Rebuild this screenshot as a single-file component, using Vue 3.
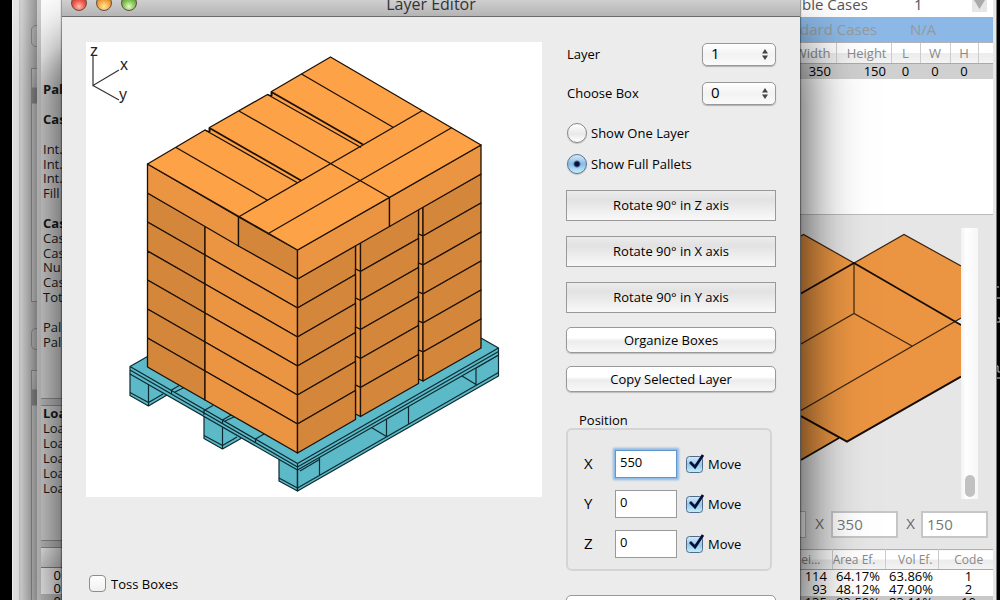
<script setup>
import { ref } from 'vue'

const layer = ref('1')
const box = ref('0')
const mode = ref('full')
const toss = ref(false)
const axes = ref([
  { name: 'X', value: '550', move: true },
  { name: 'Y', value: '0', move: true },
  { name: 'Z', value: '0', move: true },
])

const summary = [
  ['Pal', true], ['', false], ['Cas', true], ['', false], ['Int.', false], ['Int.', false],
  ['Int.', false], ['Fill', false], ['', false], ['Cas', true], ['Cas', false], ['Cas', false],
  ['Nu', false], ['Cas', false], ['Tot', false], ['', false], ['Pall', false], ['Pall', false],
]
const loads = [['Loa', true], ['Loa', false], ['Loa', false], ['Loa', false], ['Loa', false], ['Loa', false]]

const results = [
  ['114', '64.17%', '63.86%', '1'],
  ['93', '48.12%', '47.90%', '2'],
  ['135', '83.50%', '83.11%', '10'],
]

const H = 29
const courses = [1, 2, 3, 4, 5, 6]
const quad = (x1, y1, x2, y2) => `${x1},${y1} ${x2},${y2} ${x2},${y2 + H} ${x1},${y1 + H}`
</script>

<template>
  <div class="desktop">
    <svg class="marks" viewBox="0 0 3 600" width="3" height="600" aria-hidden="true">
      <path d="M0 287h2M0 298h3M1 318h2v4h-3M0 366h1v6h2M0 378h3" fill="none" stroke="#ccc" />
    </svg>

    <div class="back-window">
      <i class="knob k1"></i><i class="strip s1"></i>
      <i class="knob k2"></i><i class="strip s2"></i>
    </div>

    <main class="main-window">
      <section class="side">
        <div class="lines summary">
          <span v-for="(l, i) in summary" :key="i" :class="{ bold: l[1] }">{{ l[0] }}</span>
        </div>
        <div class="divider"></div>
        <div class="lines loads">
          <span v-for="(l, i) in loads" :key="i" :class="{ bold: l[1] }">{{ l[0] }}</span>
        </div>
        <div class="divider"></div>
        <div class="side-head"></div>
        <div class="side-rows"><span>0</span><span>0</span><span class="sel">0</span></div>
      </section>

      <section class="right">
        <div class="combo">
          <span class="cases">ble Cases</span><span>1</span>
          <button type="button" class="drop" aria-label="Open list">
            <svg width="15" height="12" viewBox="0 0 15 12"><path d="M2 0h11l-5.500 9z" fill="#aaa" /></svg>
          </button>
        </div>
        <div class="combo picked"><span class="cases">dard Cases</span><span>N/A</span></div>
        <table class="sizes">
          <thead><tr><th>Width</th><th>Height</th><th>L</th><th>W</th><th>H</th><th></th></tr></thead>
          <tbody><tr><td>350</td><td>150</td><td>0</td><td>0</td><td>0</td><td></td></tr></tbody>
        </table>
        <div class="blank"></div>
        <div class="preview">
          <svg viewBox="801 214 160 283" width="160" height="283" aria-hidden="true">
            <path d="M801 235L803.500 233.500L854 262L904 233.500L961 265V376L847 440.500L839 437L801 459Z" fill="#eb9542" />
            <path d="M955 320.500L961 317.500V324Z" fill="#dcecf5" />
            <g fill="none" stroke="#3a2410" stroke-width="1.200">
              <path d="M801 235L803.500 233.500L854 262L904 233.500L961 265M854 262V312.500M801 343L854 312.500L912 345M961 317L801 409.500" />
            </g>
            <g fill="none" stroke="#150c04" stroke-width="1.600">
              <path d="M801 292.500L854 262L961 324M801 459L839 437" />
              <path d="M801 415L847 440.500L961 375.500" stroke-width="2" />
            </g>
          </svg>
          <div class="track"><i></i></div>
        </div>
        <div class="dims">
          <i class="stub"></i>
          <span>X</span><input value="350" aria-label="Width" />
          <span>X</span><input value="150" aria-label="Height" />
        </div>
        <table class="results">
          <thead><tr><th>ei...</th><th>Area Ef.</th><th>Vol Ef.</th><th>Code</th></tr></thead>
          <tbody>
            <tr v-for="(r, i) in results" :key="i" :class="{ sel: i === 2 }">
              <td v-for="c in r" :key="c">{{ c }}</td>
            </tr>
          </tbody>
        </table>
      </section>
    </main>

    <div class="dialog" role="dialog" aria-labelledby="title">
      <header>
        <div class="lights"><i class="red"></i><i class="amber"></i><i class="green"></i></div>
        <h1 id="title">Layer Editor</h1>
      </header>
      <div class="body">
        <div class="stage">
          <svg class="canvas" viewBox="86 42 456 455" role="img" aria-label="Loaded pallet">
            <g fill="none" stroke="#333" stroke-width="1.200">
              <path d="M93 55V85.500L119 70M93 85.500L119 100" />
            </g>
            <g class="axis"><text x="90" y="56">z</text><text x="120" y="70">x</text><text x="119" y="100">y</text></g>

            <g fill="#5cb9c8" stroke="#0d2a30" stroke-width="1.200" stroke-linejoin="round">
              <path d="M130 374V395.500L148.500 406L167 395V384Z" />
              <path d="M130 392.500L148.500 402.500L163 394M148.500 384V406" fill="none" />
              <path d="M204 416V438.500L222.500 449L241 438.500V426Z" />
              <path d="M204 435.500L222.500 445.500L237 437M222.500 424V449" fill="none" />
              <path d="M279 459V481L297.500 491V469Z" />
              <path d="M279 478L297.500 488" fill="none" />
              <path d="M297.500 469V491L498.500 376V354Z" />
              <path d="M297.500 488L498.500 372.500M319.500 456V475.500M386.500 417V436.500M408.500 403V423.500M368 425.500L386.500 436.500M476 365V385M458 373.500L476 384.500M300 471L319.500 459.500M386.500 419L408.500 406M476 368L498.500 355" fill="none" />
              <path d="M130 366.500L147.500 356.500L314 300L481 338L498.500 348V355L297.500 470L130 374Z" />
              <path d="M130 366.500L297.500 463.500L498.500 348M130 370L297.500 467L498.500 351.500M297.500 463V491" fill="none" />
              <path d="M171.500 394V390L181 384.500M175 392L185 387M204 415V410.500L213 405.500M222.500 424V420L232 414.500M225 421L236 416M255.500 443V439L264 434" fill="none" />
            </g>

            <g stroke="#1d1005" stroke-width="1.300" stroke-linejoin="round">
              <g v-for="n in courses" :key="n">
                <polygon :points="quad(147.5, 164 + n * H, 205, 197 + n * H)" fill="#d4873b" />
                <polygon :points="quad(205, 197 + n * H, 297.5, 250 + n * H)" fill="#eb9542" />
                <polygon :points="quad(355.5, 211 + n * H, 360.5, 213.5 + n * H)" fill="#eb9542" />
                <polygon :points="quad(418.5, 176 + n * H, 423, 178 + n * H)" fill="#eb9542" />
                <polygon :points="quad(297.5, 250 + n * H, 355.5, 216.5 + n * H)" fill="#d4873b" />
                <polygon :points="quad(360.5, 213.5 + n * H, 418.5, 180.5 + n * H)" fill="#d4873b" />
                <polygon :points="quad(423, 178 + n * H, 481, 145 + n * H)" fill="#d4873b" />
              </g>
              <polygon :points="quad(147.5, 164, 238.5, 217)" fill="#eb9542" />
              <polygon :points="quad(238.5, 217, 297.5, 250)" fill="#d4873b" />
              <polygon :points="quad(297.5, 250, 389.5, 197.5)" fill="#eb9542" />
              <polygon :points="quad(389.5, 197.5, 481, 145)" fill="#eb9542" />
              <path d="M147.500 164L205 130L209.500 132V127.500L267.500 94.500L271.500 96V91.500L330.500 57L481 145L297.500 250Z" fill="#fda246" />
              <path d="M238.500 217L422.500 110.500M267.500 234L452 127.500M176 147.500L268 200.500M205 130L297 182.500M239 111L389.500 197.500M267.500 94.500L361 147.500M301.500 74L393.500 127.500" fill="none" />
              <path d="M209.500 127.500V132M271.500 91.500V96M209.500 128L301 180.500M271.500 92L363 144.500" fill="none" stroke-width="1.800" />
            </g>
          </svg>
          <label class="toss"><input v-model="toss" type="checkbox" class="empty" />Toss Boxes</label>
        </div>

        <form class="tools" @submit.prevent>
          <div class="pick">
            <label for="layer">Layer</label>
            <select id="layer" v-model="layer"><option>1</option></select>
          </div>
          <div class="pick">
            <label for="box">Choose Box</label>
            <select id="box" v-model="box"><option>0</option></select>
          </div>
          <div class="radios">
            <label><input v-model="mode" type="radio" name="mode" value="one" />Show One Layer</label>
            <label><input v-model="mode" type="radio" name="mode" value="full" />Show Full Pallets</label>
          </div>
          <div class="rotates">
            <button v-for="a in ['Z', 'X', 'Y']" :key="a" type="button" class="square">Rotate 90° in {{ a }} axis</button>
          </div>
          <div class="actions">
            <button type="button" class="round">Organize Boxes</button>
            <button type="button" class="round">Copy Selected Layer</button>
          </div>
          <fieldset>
            <legend>Position</legend>
            <div class="group">
              <div v-for="(a, i) in axes" :key="a.name" class="axis-row">
                <label :for="'pos' + a.name">{{ a.name }}</label>
                <input :id="'pos' + a.name" v-model="a.value" type="text" :class="{ active: i === 0 }" />
                <label class="move"><input v-model="a.move" type="checkbox" />Move</label>
              </div>
            </div>
          </fieldset>
          <button type="button" class="round" aria-label="Apply"></button>
        </form>
      </div>
    </div>
  </div>
</template>

<style>
body { background: #000; overflow: hidden; }
</style>

<style scoped>
* { box-sizing: border-box; }
.desktop {
  position: relative;
  height: 100vh;
  overflow: hidden;
  background: #000;
  color: #000;
  font: 13px/16px "Open Sans", "Noto Sans", sans-serif;
}
input, select, button { font: inherit; color: inherit; margin: 0; }
.marks { position: absolute; right: 0; top: 0; }

.back-window {
  position: absolute;
  left: 12px;
  top: 0;
  bottom: 0;
  width: 60px;
  border-left: 1px solid #f4f4f4;
  background: linear-gradient(to right, #e6e6e6 6px, #c4c4c4 6px, #dedede 8px, #dcdcdc);
}
.knob, .strip { position: absolute; left: 18px; width: 30px; border: 1px solid #aaa; }
.knob { height: 22px; border-radius: 5px; background: #e2e2e2; }
.strip { height: 260px; background: linear-gradient(#eee, #ddd 18px, #aaa 19px, #aaa 34px, #eee 35px); }
.k1 { top: 25px; }
.s1 { top: 68px; height: 234px; }
.k2 { top: 328px; }
.s2 { top: 370px; }

.main-window {
  position: absolute;
  left: 37px;
  right: 3px;
  top: 0;
  bottom: 0;
  display: flex;
  justify-content: space-between;
  overflow: hidden;
  background: #e6e6e6;
}
.back-window::after {
  content: "";
  position: absolute;
  inset: 0 35px 0 5px;
  background: linear-gradient(to right, transparent, rgba(0, 0, 0, .32));
}
.side { width: 25px; padding-top: 82px; border-left: 4px solid #cfcfcf; background: linear-gradient(150deg, #fff 50px, #e0e0e0 80px); overflow: hidden; }
.lines { display: grid; grid-auto-rows: 1fr; padding-left: 2px; white-space: nowrap; }
.lines span { align-self: center; line-height: 14px; }
.lines span:empty { height: 14px; }
.bold { font-weight: bold; }
.summary { height: 267px; color: #1c1c1c; }
.loads { height: 89px; margin-bottom: 45px; color: #1c1c1c; }
.divider { height: 8px; border: 1px solid #999; border-width: 1px 0; background: #ccc; }
.summary + .divider { margin-top: 49px; }
.side-head { height: 20px; border-bottom: 1px solid #888; background: linear-gradient(#fff, #ddd); }
.side-rows { display: grid; background: #fff; text-align: right; }
.side-rows span { height: 13px; line-height: 15px; padding-right: 1px; }
.sel { background: #c8c8c8; }

.right { width: 197px; padding-right: 3px; background: #e6e6e6; border-right: 1px solid #777; }
.combo { display: flex; height: 17px; background: #fff; color: #555; font-size: 15px; line-height: 9px; }
.combo .cases { width: 110px; padding-left: 2px; white-space: nowrap; }
.combo span:nth-child(2) { width: 62px; padding-left: 4px; }
.drop { width: 15px; height: 12px; padding: 0; border: 0; background: #e6e6e6; line-height: 0; }
.combo.picked { height: 26px; line-height: 25px; background: #8bb8e6; color: #999; border-bottom: 1px solid #b4b4b4; }
.picked .cases { padding-left: 0; }
.picked span:nth-child(2) { padding-left: 0; }
table { width: 100%; border-collapse: collapse; table-layout: fixed; }
th { font-weight: normal; color: #888; background: linear-gradient(#fff 50%, #ebebeb 50%, #f4f4f4); border-bottom: 1px solid #aaa; }
td, th { padding: 0; white-space: nowrap; overflow: hidden; }
.sizes th { height: 19px; line-height: 20px; text-align: center; }
.sizes th:not(:last-child) { border-right: 1px solid #ccc; }
.sizes th:nth-child(1) { width: 36px; direction: rtl; padding-right: 5px; }
.sizes th:nth-child(2) { width: 55px; text-align: right; padding-right: 4px; }
.sizes th:nth-child(3) { width: 29px; }
.sizes th:nth-child(4) { width: 30px; }
.sizes th:nth-child(5) { width: 28px; }
.sizes td { height: 15px; line-height: 15px; background: #d0d0d0; text-align: center; }
.sizes td:nth-child(1) { text-align: right; padding-right: 5px; }
.sizes td:nth-child(2) { text-align: right; padding-right: 5px; }
.blank { height: 136px; background: #fff; border-bottom: 1px solid #bbb; }
.preview { display: flex; height: 296px; padding-left: 1px; }
.preview svg { flex: none; }
.track { width: 17px; height: 271px; margin-top: 13px; padding: 247px 3px 0 4px; background: linear-gradient(to right, #f2f2f2, #fff 30%, #f6f6f6); }
.track i { display: block; height: 22px; border-radius: 5px; background: #c1c1c1; }
.dims { display: flex; align-items: center; height: 27px; color: #666; font-size: 15px; }
.dims .stub { width: 6px; height: 27px; border: 1px solid #bbb; border-left: 0; background: #fff; }
.dims span { width: 25px; padding: 0 0 3px 2px; text-align: center; }
.dims span:nth-of-type(2) { width: 23px; }
.dims input { width: 67px; height: 27px; padding: 0 4px 2px; border: 2px solid #c6c6c6; background: #fff; color: #777; }
.results { margin-top: 11px; border-top: 1px solid #b0b0b0; background: #fff; }
.results th { height: 20px; font-size: 12px; line-height: 19px; text-align: right; padding-right: 9px; }
.results th:not(:last-child) { border-right: 1px solid #ccc; }
.results th:nth-child(1) { width: 32px; padding-right: 11px; }
.results th:nth-child(2) { width: 53px; }
.results th:nth-child(3) { width: 53px; padding-right: 5px; }
.results th:nth-child(4), .results td:nth-child(4) { text-align: center; padding: 0 0 0 6px; }
.results td { height: 13px; line-height: 13px; text-align: right; padding-right: 5px; }

.dialog {
  position: absolute;
  left: 62px;
  right: 200px;
  top: 0;
  bottom: 0;
  background: #ececec;
  box-shadow: 0 40px 56px rgba(0, 0, 0, .85), 0 0 1px 1px rgba(0, 0, 0, .35);
}
header { position: relative; height: 17px; border-bottom: 1px solid #6b6b6b; background: linear-gradient(#cfcfcf, #b4b4b4); }
h1 { margin: 0; text-align: center; font-size: 16px; font-weight: normal; line-height: 8px; color: #333; }
.lights { position: absolute; left: 9px; top: -5px; display: flex; gap: 9px; }
.lights i { width: 16px; height: 16px; border-radius: 50%; border: 1px solid #6a4a44; }
.red { background: radial-gradient(circle at 50% 75%, #ffc0b0, #ee5a4c 45%, #a92a22); }
.amber { background: radial-gradient(circle at 50% 75%, #ffe9a0, #f3a840 45%, #b06a18); }
.green { background: radial-gradient(circle at 50% 75%, #e0ffc0, #84c455 45%, #477c22); }
.body { display: flex; gap: 24px; padding: 25px 24px 0 24px; }
.stage { flex: 1; min-width: 0; }
.canvas { display: block; width: 100%; background: #fff; }
.axis { font: 16px "Liberation Sans", sans-serif; fill: #222; }
.toss { display: flex; align-items: center; gap: 5px; margin: 78px 0 0 3px; }
.empty { appearance: none; width: 17px; height: 17px; border: 1px solid #8e8e8e; border-radius: 4px; background: linear-gradient(#fff, #f0f0f0); }

.tools { width: 210px; flex: none; }
.pick { display: flex; justify-content: space-between; align-items: center; height: 22px; margin: 1px 0 17px; }
.pick + .pick { margin-bottom: 19px; }
.pick label { padding: 0 0 0 1px; }
select {
  appearance: none;
  width: 74px;
  height: 23px;
  padding: 0 8px 3px;
  border: 1px solid #999;
  border-radius: 5px;
  font-size: 15px;
  line-height: 18px;
  background: url("data:image/svg+xml,%3Csvg xmlns='http://www.w3.org/2000/svg' width='6' height='11'%3E%3Cpath d='M0 4.500L3 0L6 4.500zM0 6.500L3 11L6 6.500z' fill='%23444'/%3E%3C/svg%3E") no-repeat right 7px center, linear-gradient(#fff, #f2f2f2 50%, #fafafa);
  box-shadow: 0 1px 1px rgba(0, 0, 0, .25);
}
.radios { display: grid; gap: 11px; padding-left: 1px; }
.radios label { display: flex; align-items: center; gap: 4px; height: 20px; }
.radios input {
  appearance: none;
  width: 20px;
  height: 20px;
  border: 1px solid #888;
  border-radius: 50%;
  background: linear-gradient(#fff, #e9e9e9 55%, #fff);
  box-shadow: 0 1px 1px rgba(0, 0, 0, .2);
}
.radios input:checked {
  border-color: #5d7590;
  background: radial-gradient(circle, #0a1038 2px, transparent 4px), linear-gradient(#d6e8f8, #86bce8 50%, #c8f0ff);
}
.rotates { display: grid; gap: 15px; margin-top: 16px; }
.square { height: 31px; padding: 0 0 2px; border: 1px solid #999; background: linear-gradient(#ececec, #e2e2e2 30%, #f9f9f9); }
.actions { display: grid; gap: 13px; margin-top: 14px; }
.round {
  width: 100%;
  height: 26px;
  padding: 0 0 1px;
  border: 1px solid #999;
  border-radius: 5px;
  background: linear-gradient(#fff, #fff 40%, #ececec 55%, #f8f8f8);
  box-shadow: 0 1px 1px rgba(0, 0, 0, .2);
}
fieldset { margin: 20px 4px 24px 0; padding: 0; border: 0; min-width: 0; }
legend { padding: 0 0 0 13px; }
.group { height: 143px; padding: 20px 0 0 13px; border: 2px solid #d4d4d4; border-radius: 6px; background: #e9e9e9; }
.axis-row { display: flex; align-items: center; height: 28px; margin-bottom: 12px; }
.axis-row > label:first-child { width: 34px; padding: 0 0 3px 3px; font-size: 15px; }
.axis-row > input { width: 62px; height: 28px; padding: 0 4px 4px; border: 1px solid #999; background: #fff; outline: 0; }
.axis-row > input.active { border-color: #5f98cc; box-shadow: 0 0 2px 2px #8db9e4; }
.move { display: flex; align-items: center; gap: 3px; margin-left: 8px; padding-bottom: 1px; }
.move input {
  appearance: none;
  width: 20px;
  height: 22px;
  background: url("data:image/svg+xml,%3Csvg xmlns='http://www.w3.org/2000/svg' width='20' height='22'%3E%3Cdefs%3E%3ClinearGradient id='g' x2='0' y2='1'%3E%3Cstop stop-color='%23d6ecfa'/%3E%3Cstop offset='.5' stop-color='%2396c8ea'/%3E%3Cstop offset='1' stop-color='%23c4f0fa'/%3E%3C/linearGradient%3E%3C/defs%3E%3Crect x='1.500' y='3.500' width='16' height='16' rx='3' fill='url(%23g)' stroke='%23506c88'/%3E%3Cpath d='M5 9L10 14L18 2' fill='none' stroke='%2306103c' stroke-width='2.800'/%3E%3C/svg%3E") no-repeat;
}
</style>
